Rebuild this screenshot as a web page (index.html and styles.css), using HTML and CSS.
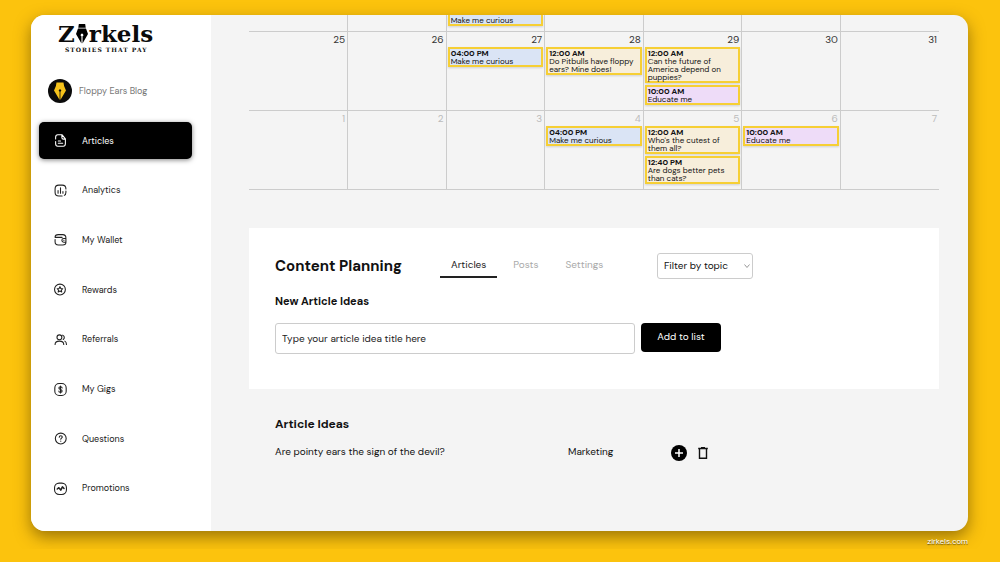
FILE: index.html
```html
<!DOCTYPE html>
<html lang="en">
<head>
  <meta charset="utf-8">
  <title>Zirkels - Content Planning</title>
  <link rel="stylesheet" href="styles.css">
</head>
<body>
  <div class="window">
    <aside class="sidebar">
      <div class="logo">
        <div class="logo-name">
          <span>Z</span>
          <svg class="logo-nib" viewBox="0 0 14 22">
            <path d="M3.500 0h7l.6 4H2.900z M2.600 5h8.800L13.600 11 7.600 21.500V13.600a1.500 1.500 0 1 0-1.200 0V21.500L.4 11z"/>
          </svg>
          <span>rkels</span>
        </div>
        <div class="logo-tagline">STORIES THAT PAY</div>
      </div>

      <div class="profile">
        <svg class="avatar" viewBox="0 0 24 24">
          <circle cx="12" cy="12" r="12" fill="#0b0b0b"/>
          <path d="M8.500 3.500h7l.6 3.500 1.900 4.500L12.400 21v-8.300a1.200 1.200 0 1 0-.8 0V21L6 11.500 7.900 7z" fill="#f5c21b"/>
        </svg>
        <span>Floppy Ears Blog</span>
      </div>

      <nav class="menu">
        <a class="menu-item active" href="#">
          <svg viewBox="0 0 24 24"><path d="M3 14v4c0 2.500 1.500 4.500 4 4.500h10c2.500 0 4-2 4-4.500V9l-6-7.500H7C4.500 1.500 3 3.500 3 6v3M14.500 2v4.500c0 2 1 3 3 3H21M8 13h4M8 17h8"/></svg>
          <span>Articles</span>
        </a>
        <a class="menu-item" href="#">
          <svg viewBox="0 0 24 24"><path d="M22 9c0-5-2-7-7-7H9C4 2 2 4 2 9v6c0 5 2 7 7 7h6M22 13v2c0 3-1 5-3 6M7.500 17v-5M12 17V7M16.500 17v-3"/></svg>
          <span>Analytics</span>
        </a>
        <a class="menu-item" href="#">
          <svg viewBox="0 0 24 24"><path d="M2 12v4c0 4 2 6 6 6h8c4 0 6-2 6-5M2 8c0-3 2-5 6-5h8c4 0 6 2 6 6M2 8h13M22 10h-4a3.500 3.500 0 0 0 0 7h4zM18 13.500h.5"/></svg>
          <span>My Wallet</span>
        </a>
        <a class="menu-item" href="#">
          <svg viewBox="0 0 24 24"><circle cx="11" cy="12" r="10"/><path d="M11 6.800l1.600 3.200 3.500.5-2.500 2.500.6 3.500-3.200-1.700-3.200 1.700.6-3.500-2.500-2.500 3.500-.5z"/></svg>
          <span>Rewards</span>
        </a>
        <a class="menu-item" href="#">
          <svg viewBox="0 0 24 24"><circle cx="10" cy="8" r="4.500"/><path d="M2 21c0-4 3-6 8-6s8 2 8 6M16 4a4.500 4.500 0 0 1 1 8M20 15c2 1 3 3 3 6"/></svg>
          <span>Referrals</span>
        </a>
        <a class="menu-item" href="#">
          <svg viewBox="0 0 24 24"><rect x="1.500" y="1" width="21" height="22" rx="8"/><path d="M15 9c0-1.500-1.300-2-3-2s-3 .8-3 2.400c0 3.400 6 1.800 6 5.200 0 1.600-1.300 2.400-3 2.400s-3-.6-3-2M12 5.500v13"/></svg>
          <span>My Gigs</span>
        </a>
        <a class="menu-item" href="#">
          <svg viewBox="0 0 24 24"><circle cx="12.500" cy="12" r="10"/><path d="M9.700 9.500c0-1.800 1.200-2.700 2.800-2.700s2.800 1 2.800 2.500c0 2-2.800 2.200-2.800 4.200M12.500 16.500v.6"/></svg>
          <span>Questions</span>
        </a>
        <a class="menu-item" href="#">
          <svg viewBox="0 0 24 24"><rect x="1" y="2" width="22" height="21" rx="8.500"/><path d="M6 13l3-2.500 3.500 4.500L15.500 9l3 3" stroke-width="2.800"/></svg>
          <span>Promotions</span>
        </a>
      </nav>
    </aside>

    <main class="main">
      <table class="calendar">
        <tbody>
          <tr class="week-cut">
            <td></td>
            <td></td>
            <td><div class="event blue event-cut">Make me curious</div></td>
            <td></td>
            <td></td>
            <td></td>
            <td></td>
          </tr>
          <tr>
            <td><div class="date">25</div></td>
            <td><div class="date">26</div></td>
            <td>
              <div class="date">27</div>
              <div class="event blue"><b>04:00 PM</b>Make me curious</div>
            </td>
            <td>
              <div class="date">28</div>
              <div class="event cream"><b>12:00 AM</b>Do Pitbulls have floppy ears? Mine does!</div>
            </td>
            <td>
              <div class="date">29</div>
              <div class="event cream"><b>12:00 AM</b>Can the future of America depend on puppies?</div>
              <div class="event pink"><b>10:00 AM</b>Educate me</div>
            </td>
            <td><div class="date">30</div></td>
            <td><div class="date">31</div></td>
          </tr>
          <tr class="next-month">
            <td><div class="date">1</div></td>
            <td><div class="date">2</div></td>
            <td><div class="date">3</div></td>
            <td>
              <div class="date">4</div>
              <div class="event blue"><b>04:00 PM</b>Make me curious</div>
            </td>
            <td>
              <div class="date">5</div>
              <div class="event cream"><b>12:00 AM</b>Who's the cutest of them all?</div>
              <div class="event cream"><b>12:40 PM</b>Are dogs better pets than cats?</div>
            </td>
            <td>
              <div class="date">6</div>
              <div class="event pink"><b>10:00 AM</b>Educate me</div>
            </td>
            <td><div class="date">7</div></td>
          </tr>
        </tbody>
      </table>

      <section class="planning">
        <div class="planning-head">
          <h1>Content Planning</h1>
          <div class="tabs">
            <button class="tab selected" type="button">Articles</button>
            <button class="tab" type="button">Posts</button>
            <button class="tab" type="button">Settings</button>
          </div>
          <div class="filter">
            <select aria-label="Filter by topic">
              <option>Filter by topic</option>
            </select>
            <svg class="chevron" viewBox="0 0 8 8"><path d="M1.500 2.500L4 5.500l2.500-3"/></svg>
          </div>
        </div>

        <form class="idea-form">
          <label for="idea">New Article Ideas</label>
          <div class="idea-row">
            <input id="idea" type="text" placeholder="Type your article idea title here">
            <button class="add" type="button">Add to list</button>
          </div>
        </form>
      </section>

      <section class="ideas">
        <h2>Article Ideas</h2>
        <div class="idea">
          <span>Are pointy ears the sign of the devil?</span>
          <span>Marketing</span>
          <div class="idea-actions">
            <button type="button" aria-label="Add">
              <svg viewBox="0 0 16 16"><circle cx="8" cy="8" r="8"/><path d="M8 4v8M4 8h8" stroke="#fff" stroke-width="1.500"/></svg>
            </button>
            <button type="button" aria-label="Delete">
              <svg viewBox="0 0 16 16"><path d="M3.200 3.500h9.600M6 2.600h4M4.500 4v9.300h7V4" fill="none" stroke="#111" stroke-width="1.400"/></svg>
            </button>
          </div>
        </div>
      </section>
    </main>
  </div>

  <footer class="site">zirkels.com</footer>
</body>
</html>
```
FILE: styles.css
```css
* {
  box-sizing: border-box;
}
body {
  margin: 0;
  padding: 15px 32px 0 31px;
  background-color: #fcc30d;
  color: #111;
  font-family: "DM Sans", Inter, sans-serif;
  font-size: 10px;
  line-height: 14px;
}
button, input, select {
  font: inherit;
  color: inherit;
}
.window {
  display: flex;
  min-height: calc(100vh - 46px);
  background-color: #f4f4f4;
  border-radius: 14px;
  overflow: hidden;
  box-shadow: 0 6px 16px rgba(60, 40, 0, 0.5);
}

/* sidebar */
.sidebar {
  display: flex;
  flex-direction: column;
  flex: 0 0 180px;
  padding: 6px 19px 24px 8px;
  background-color: #fff;
}
.logo {
  padding-left: 19px;
}
.logo-name {
  display: flex;
  align-items: center;
  height: 26px;
  font: bold 23px/26px "DejaVu Serif", serif;
  color: #0b0b0b;
}
.logo-nib {
  width: 14px;
  height: 20px;
}
.logo-tagline {
  padding-left: 7px;
  font: bold 6px/6px "DejaVu Serif", serif;
  letter-spacing: 1px;
}
.profile {
  display: flex;
  align-items: center;
  gap: 7px;
  padding: 26px 0 0 9px;
  font-size: 9px;
  color: #777;
}
.avatar {
  width: 24px;
  height: 24px;
}
.menu {
  display: flex;
  flex: 1;
  flex-direction: column;
  justify-content: space-between;
  margin-top: 19px;
}
.menu-item {
  display: flex;
  align-items: center;
  gap: 15px;
  height: 37px;
  padding-left: 15px;
  border-radius: 5px;
  font-size: 9px;
  color: #222;
  text-decoration: none;
}
.menu-item svg {
  width: 13px;
  height: 13px;
  fill: none;
  stroke: currentColor;
  stroke-width: 2;
  stroke-linecap: round;
  stroke-linejoin: round;
}
.menu-item.active {
  background-color: #000;
  color: #fff;
  box-shadow: 0 1px 5px rgba(0, 0, 0, 0.5);
}

/* calendar */
.main {
  flex: 1;
  padding: 0 29px 0 38px;
}
.calendar {
  width: 100%;
  table-layout: fixed;
  border-collapse: collapse;
}
.calendar td {
  height: 79px;
  padding: 0 1px;
  vertical-align: top;
  border-bottom: 1px solid #ccc;
  border-right: 1px solid #ccc;
}
.calendar td:last-child {
  border-right: none;
}
.calendar .week-cut td {
  height: 16px;
}
.date {
  height: 15px;
  padding-right: 1px;
  line-height: 15px;
  text-align: right;
  color: #333;
}
.next-month .date {
  color: #bbb;
}
.event {
  margin-bottom: 2px;
  padding-left: 1px;
  border: 2px solid #f6cf35;
  font-size: 8px;
  line-height: 8px;
  box-shadow: 0 1px 2px rgba(0, 0, 0, 0.15);
}
.event b {
  display: block;
}
.event-cut {
  padding-top: 1px;
  border-top: none;
}
.blue {
  background-color: #dae4f5;
}
.cream {
  background-color: #f7eedb;
}
.pink {
  background-color: #eedcf8;
}

/* content planning */
.planning {
  margin-top: 38px;
  padding: 25px 26px 35px;
  background-color: #fff;
}
.planning-head {
  display: grid;
  grid-template-columns: 165px 217px 96px;
  align-items: center;
}
h1, h2 {
  margin: 0;
}
h1 {
  font-size: 15px;
  line-height: 20px;
}
.tabs {
  display: flex;
  gap: 5px;
}
.tab {
  height: 24px;
  padding: 0 11px;
  border: none;
  border-bottom: 2px solid transparent;
  background: none;
  color: #aaa;
}
.tab.selected {
  border-bottom-color: #222;
  color: #222;
}
.filter {
  position: relative;
}
.filter select {
  display: block;
  width: 100%;
  height: 26px;
  padding: 0 6px;
  border: 1px solid #ccc;
  border-radius: 3px;
  background-color: #fff;
  appearance: none;
}
.chevron {
  position: absolute;
  top: 9px;
  right: 2px;
  width: 8px;
  height: 8px;
  fill: none;
  stroke: #999;
  pointer-events: none;
}
.idea-form label {
  display: block;
  margin: 15px 0;
  font-size: 11px;
  font-weight: bold;
}
.idea-row {
  display: flex;
  align-items: flex-start;
  gap: 6px;
}
.idea-row input {
  width: 360px;
  height: 31px;
  padding: 0 6px;
  border: 1px solid #ccc;
  border-radius: 3px;
  background-color: #fff;
}
.idea-row input::placeholder {
  color: #222;
}
.add {
  width: 80px;
  height: 29px;
  border: none;
  border-radius: 4px;
  background-color: #000;
  color: #fff;
}

/* saved ideas */
.ideas {
  padding: 27px 26px;
}
h2 {
  font-size: 12px;
  line-height: 16px;
}
.idea {
  display: grid;
  grid-template-columns: 293px 103px auto;
  margin-top: 13px;
}
.idea-actions {
  display: flex;
  gap: 8px;
}
.idea-actions button {
  height: 16px;
  padding: 0;
  border: none;
  background: none;
}
.idea-actions svg {
  display: block;
  width: 16px;
  height: 16px;
}

.site {
  padding-top: 4px;
  font-family: Roboto, sans-serif;
  font-size: 8px;
  text-align: right;
  color: #fff;
  text-shadow: 0 1px 1px rgba(0, 0, 0, 0.6);
}
```
